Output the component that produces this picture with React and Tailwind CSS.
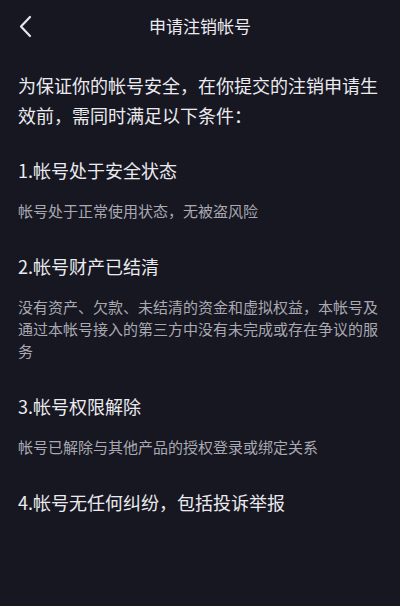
import React from "react";

const font = { fontFamily: '"Noto Sans CJK SC", "Noto Sans", sans-serif' };

function Section({ title, desc, last }) {
  return (
    <div className={last ? "" : "mb-[31px]"}>
      <div className="text-[18px] leading-[26px] text-[#ebebef]">{title}</div>
      {desc && (
        <div className="mt-[17px] text-[15px] leading-[22px] text-[#a9a9b1]">{desc}</div>
      )}
    </div>
  );
}

export default function App() {
  return (
    <div className="w-[400px] h-[606px] bg-[#171722] overflow-hidden" style={font}>
      <div className="relative h-[52px] flex items-center justify-center">
        <svg className="absolute left-[17px] top-[15px]" width="16" height="23" viewBox="0 0 16 23" fill="none">
          <path d="M13 2 L4 11.5 L13 21" stroke="#e6e6ea" strokeWidth="2.2" strokeLinecap="round" strokeLinejoin="round" />
        </svg>
        <div className="text-[17px] text-[#ebebef]">申请注销帐号</div>
      </div>
      <div className="px-[18px] pt-[18px]">
        <div className="text-[18px] leading-[30px] text-[#ebebef] mb-[27px]">
          为保证你的帐号安全，在你提交的注销申请生效前，需同时满足以下条件：
        </div>
        <Section title="1.帐号处于安全状态" desc="帐号处于正常使用状态，无被盗风险" />
        <Section
          title="2.帐号财产已结清"
          desc="没有资产、欠款、未结清的资金和虚拟权益，本帐号及通过本帐号接入的第三方中没有未完成或存在争议的服务"
        />
        <Section title="3.帐号权限解除" desc="帐号已解除与其他产品的授权登录或绑定关系" />
        <div className="mt-[3px]">
          <Section title="4.帐号无任何纠纷，包括投诉举报" last />
        </div>
      </div>
    </div>
  );
}
